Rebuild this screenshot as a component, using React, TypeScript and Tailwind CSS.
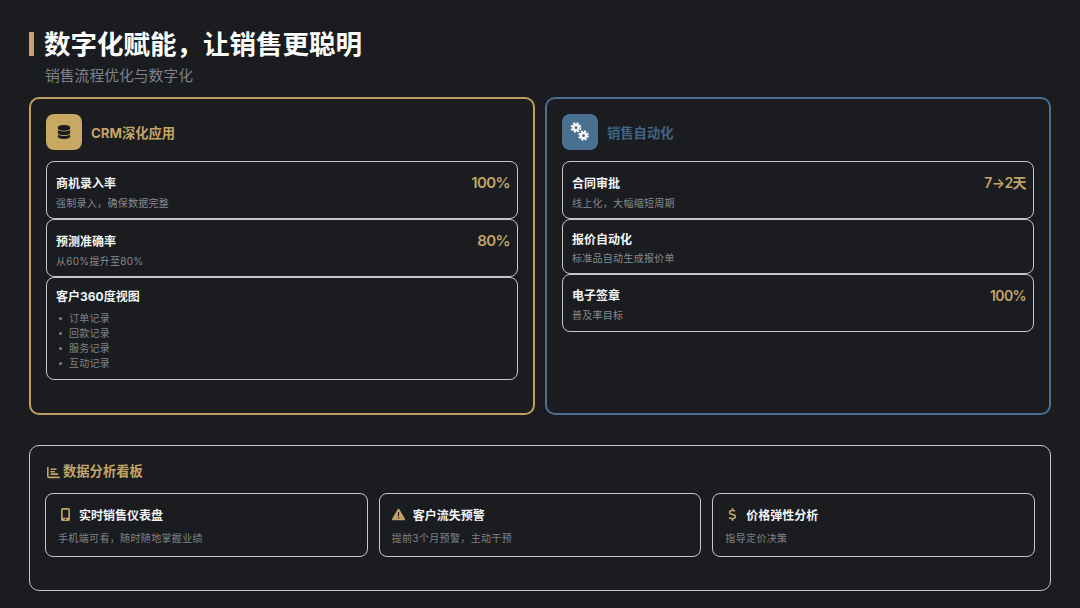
import { FaChartBar, FaDatabase, FaTriangleExclamation, FaDollarSign, FaMobileScreenButton } from "react-icons/fa6";
import type { ReactNode } from "react";

const font = { fontFamily: '"Inter", "Noto Sans CJK SC", sans-serif' };

function Row({ title, desc, value, h, valueSize = "text-[15px]", top = "mt-[13px]", descGap = "mt-[4px]" }: { title: string; desc: string; value?: string; h: string; valueSize?: string; top?: string; descGap?: string }) {
  return (
    <div className={`relative ${h} rounded-lg border-[1.5px] border-[#c4c6c9] px-[9px] flex flex-col`}>
      <div className={`${top} text-[12px] leading-[17px] font-bold text-[#f3f4f6]`}>{title}</div>
      <div className={`${descGap} text-[10px] leading-[14px] tracking-[0.28px] text-[#85898f]`}>{desc}</div>
      {value && <div className={`absolute right-[7px] top-[11px] ${valueSize} leading-[20px] font-semibold tracking-[-0.6px] text-[#c0a468]`}>{value}</div>}
    </div>
  );
}

function Panel({ color, icon, title, children }: { color: "gold" | "blue"; icon: ReactNode; title: string; children: ReactNode }) {
  const gold = color === "gold";
  return (
    <div className={`h-[318px] rounded-[10px] border-2 px-[15px] pt-[15px] ${gold ? "border-[#bd9f62]" : "border-[#4a7090]"}`}>
      <div className="flex items-center gap-[9px] h-[36px] mb-[11px]">
        <div className={`w-[36px] h-[36px] rounded-lg flex items-center justify-center ${gold ? "bg-[#c9a961] text-[#1a1c20]" : "bg-[#4a7090] text-white"}`}>{icon}</div>
        <div className={`pt-[2px] text-[13.3px] leading-[20px] font-bold ${gold ? "text-[#c4a564]" : "text-[#3f6485]"}`}>{title}</div>
      </div>
      <div className="flex flex-col">{children}</div>
    </div>
  );
}

function Tile({ icon, title, desc }: { icon: ReactNode; title: string; desc: string }) {
  return (
    <div className="flex-1 h-[64px] rounded-lg border-[1.5px] border-[#c4c6c9] px-[12px] pt-[13px]">
      <div className="flex items-center h-[18px] gap-[7px]">
        <div className="w-[14px] mb-[3px] flex justify-center text-[#c0a468]">{icon}</div>
        <div className="text-[12px] font-bold text-[#f3f4f6]">{title}</div>
      </div>
      <div className="mt-[6px] text-[10px] leading-[14px] tracking-[0.35px] text-[#7f838a]">{desc}</div>
    </div>
  );
}

function Gears() {
  return (
    <svg width="36" height="36" viewBox="0 0 36 36" fill="none" stroke="white">
      <circle cx="14" cy="13.5" r="2.6" strokeWidth="2.2" />
      <circle cx="14" cy="13.5" r="4.4" strokeWidth="1.8" strokeDasharray="2.1 1.36" />
      <circle cx="21.5" cy="21.5" r="2.6" strokeWidth="2.2" />
      <circle cx="21.5" cy="21.5" r="4.4" strokeWidth="1.8" strokeDasharray="2.1 1.36" />
    </svg>
  );
}

export default function App() {
  return (
    <div style={font} className="w-[1080px] h-[608px] overflow-hidden bg-[#1a1c20] px-[29px] pt-[28px]">
      <div className="flex items-center h-[32px]">
        <div className="w-[5px] h-[24px] bg-[#c0a468]" />
        <h1 className="ml-[10px] text-[26.5px] leading-[32px] font-bold text-white">数字化赋能，让销售更聪明</h1>
      </div>
      <div className="ml-[16px] mt-[6px] text-[14.8px] leading-[20px] text-[#7d828b]">销售流程优化与数字化</div>
      <div className="mt-[11px] grid grid-cols-2 gap-[10px]">
        <Panel color="gold" icon={<FaDatabase size={14} />} title="CRM深化应用">
          <Row h="h-[58px]" title="商机录入率" desc="强制录入，确保数据完整" value="100%" />
          <Row h="h-[58px]" title="预测准确率" desc="从60%提升至80%" value="80%" />
          <div className="h-[103px] rounded-lg border-[1.5px] border-[#c4c6c9] px-[9px] pt-[10px]">
            <div className="text-[12px] leading-[17px] font-bold text-[#f3f4f6]">客户360度视图</div>
            <ul className="mt-[6px] text-[10px] leading-[15px] tracking-[0.28px] text-[#7f838a]">
              {["订单记录", "回款记录", "服务记录", "互动记录"].map((t) => (
                <li key={t} className="flex items-center">
                  <span className="ml-[3px] w-[3px] h-[3px] rounded-full bg-[#7f838a]" />
                  <span className="ml-[7px]">{t}</span>
                </li>
              ))}
            </ul>
          </div>
        </Panel>
        <Panel color="blue" icon={<Gears />} title="销售自动化">
          <Row h="h-[58px]" title="合同审批" desc="线上化，大幅缩短周期" value="7→2天" valueSize="text-[14px]" />
          <Row h="h-[55px]" title="报价自动化" desc="标准品自动生成报价单" top="mt-[11px]" descGap="mt-[3px]" />
          <Row h="h-[58px]" title="电子签章" desc="普及率目标" value="100%" valueSize="text-[14px]" top="mt-[12px]" />
        </Panel>
      </div>
      <div className="mt-[30px] h-[146px] rounded-[10px] border-[1.5px] border-[#c4c6c9] px-[15px] pt-[16px]">
        <div className="flex items-center h-[20px] text-[#c0a468]">
          <FaChartBar size={13} className="ml-[2px]" />
          <div className="ml-[3px] text-[13.3px] font-bold">数据分析看板</div>
        </div>
        <div className="mt-[11px] flex gap-[11px]">
          <Tile icon={<FaMobileScreenButton size={13} />} title="实时销售仪表盘" desc="手机端可看，随时随地掌握业绩" />
          <Tile icon={<FaTriangleExclamation size={13} />} title="客户流失预警" desc="提前3个月预警，主动干预" />
          <Tile icon={<FaDollarSign size={13} />} title="价格弹性分析" desc="指导定价决策" />
        </div>
      </div>
    </div>
  );
}
